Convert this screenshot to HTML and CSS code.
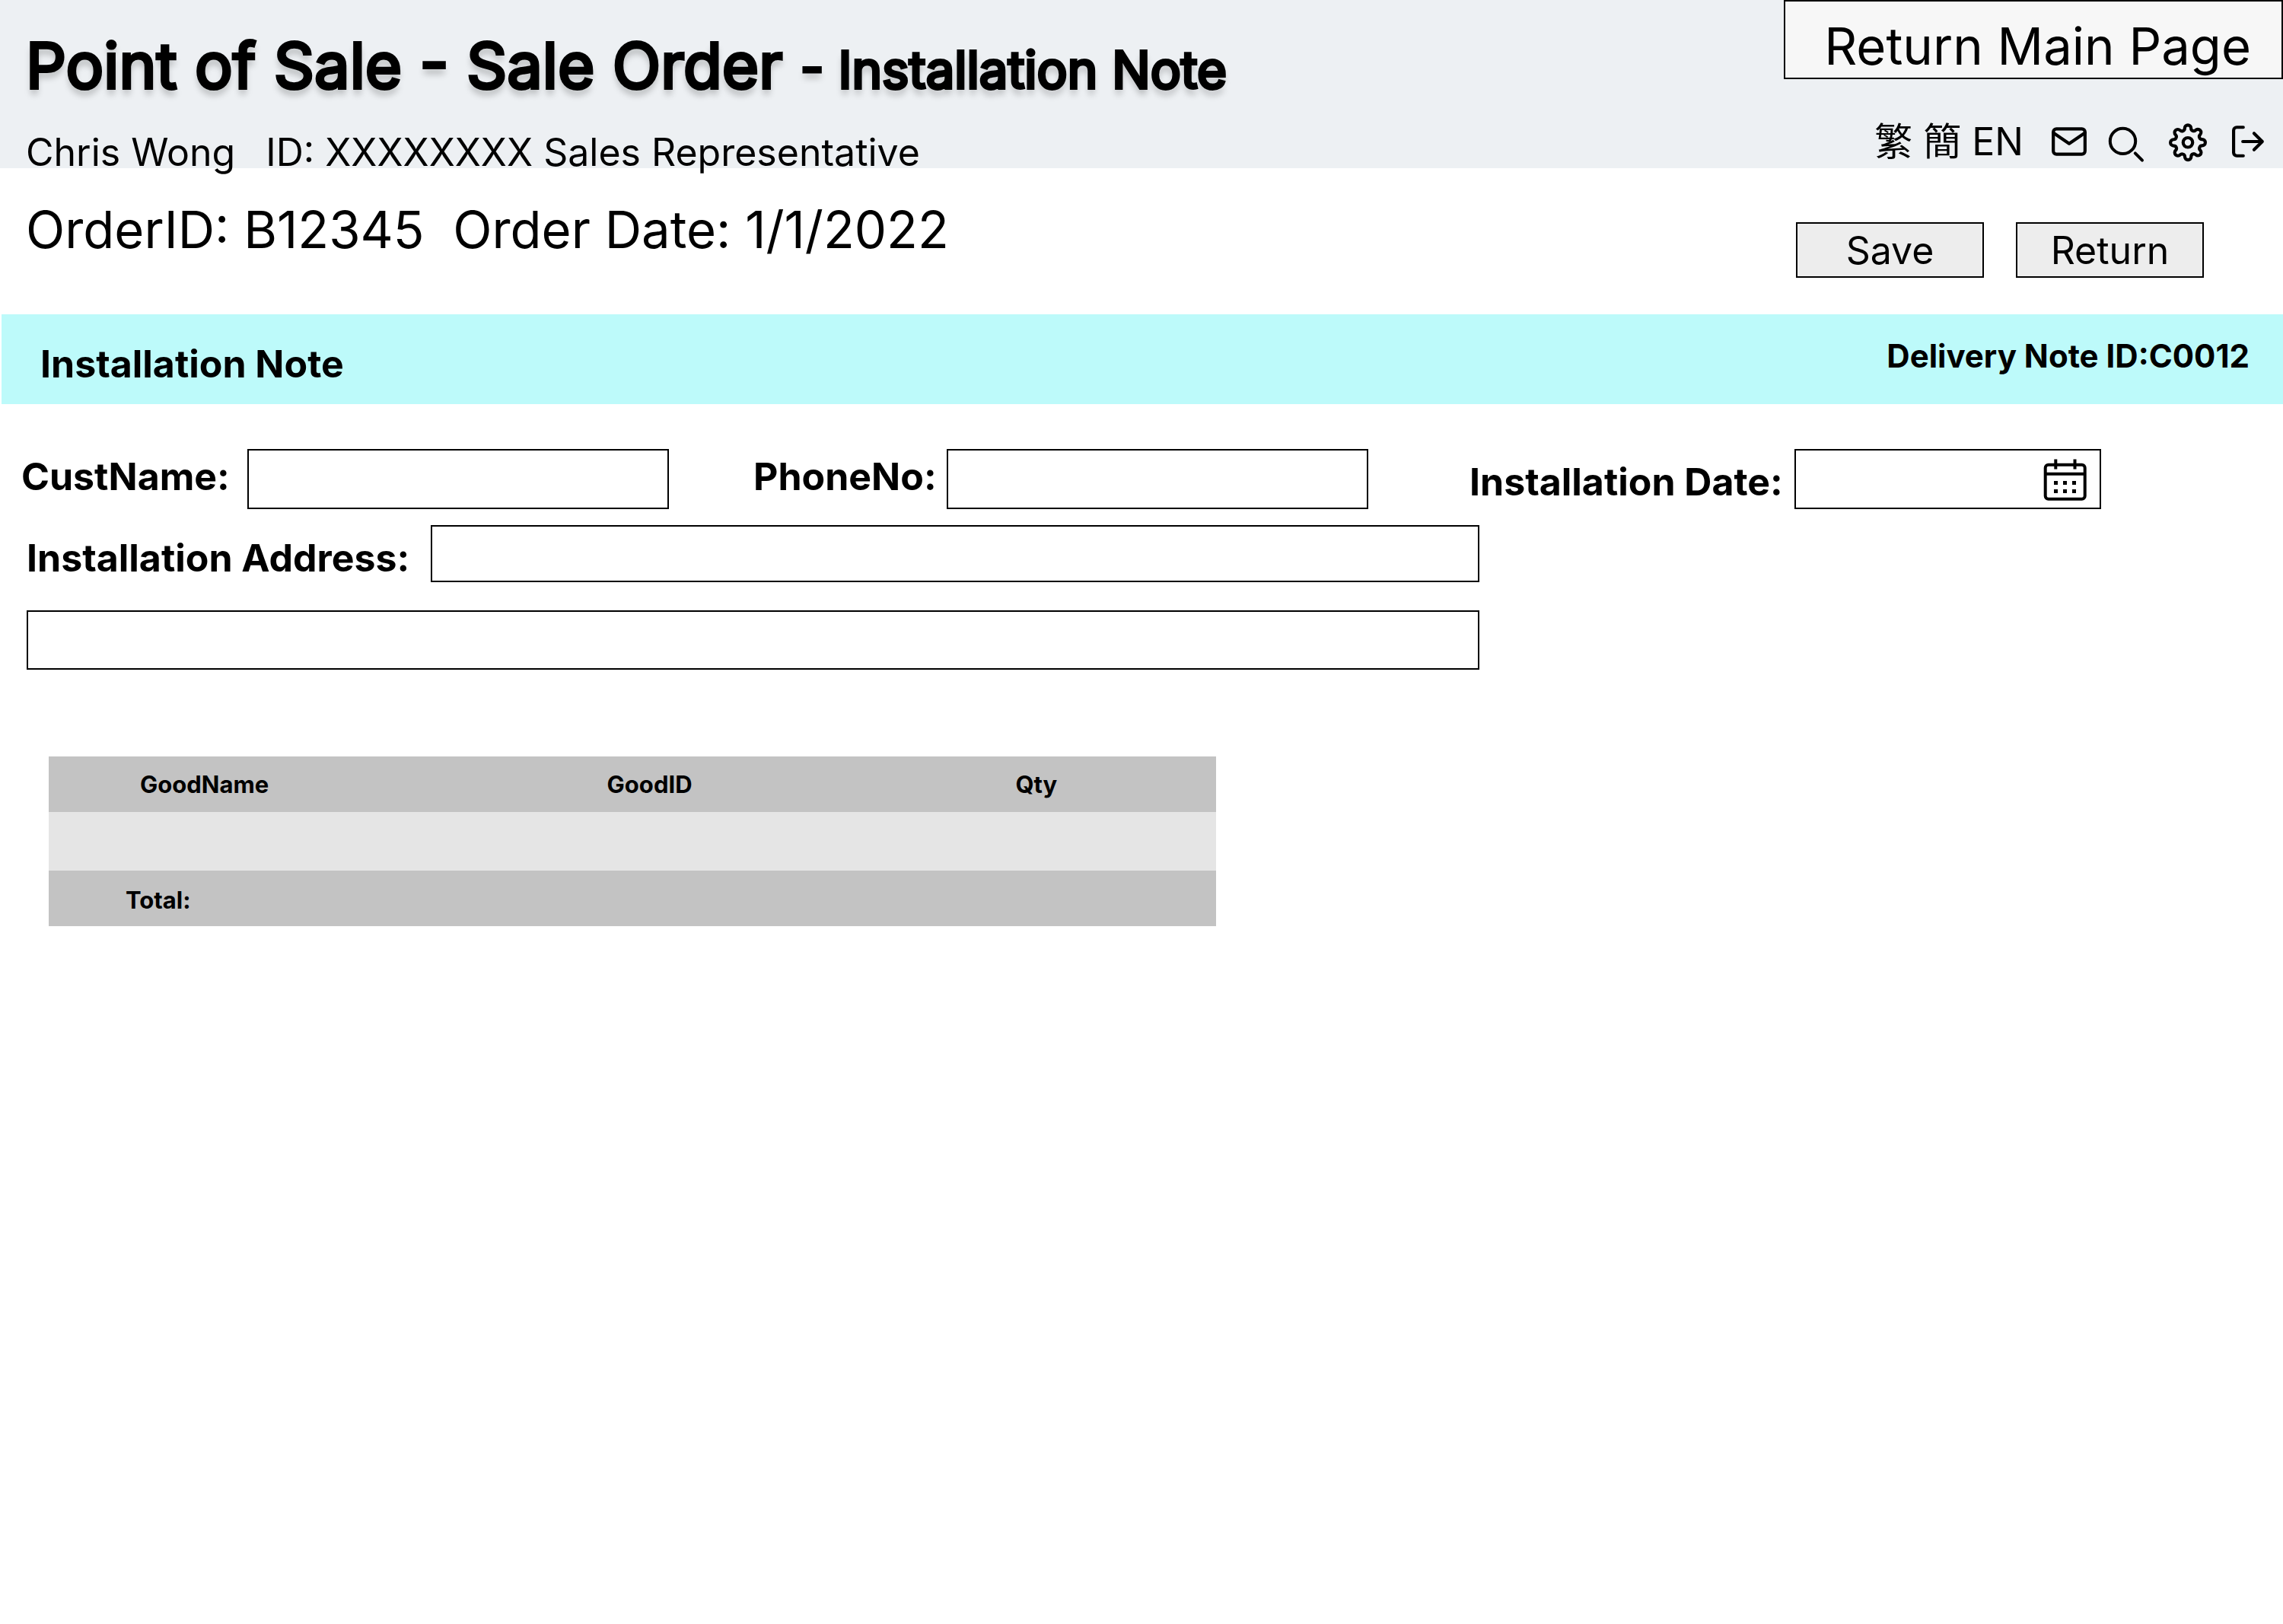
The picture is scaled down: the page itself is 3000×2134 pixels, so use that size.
FILE: index.html
```html
<!DOCTYPE html>
<html lang="en">
<head>
  <meta charset="utf-8">
  <title>Point of Sale - Installation Note</title>
  <link rel="stylesheet" href="styles.css">
</head>
<body>
  <header class="topbar">
    <div class="topbar-info">
      <h1 class="title">Point of Sale - Sale Order <span class="title-sub">- Installation Note</span></h1>
      <p class="user">Chris Wong <span class="user-id">ID: XXXXXXXX</span> Sales Representative</p>
    </div>
    <div class="topbar-side">
      <button class="main-page" type="button">Return Main Page</button>
      <nav class="tools">
        <div class="languages">
          <a class="language" href="#" lang="zh-Hant">繁</a>
          <a class="language" href="#" lang="zh-Hant">簡</a>
          <a class="language" href="#">EN</a>
        </div>
        <button class="tool" type="button" aria-label="Mail">
          <svg class="icon" viewBox="0 0 24 24"><rect x="2" y="4" width="20" height="16" rx="2"/><path d="M22 6.5 12 13.3 2 6.5"/></svg>
        </button>
        <button class="tool" type="button" aria-label="Search">
          <svg class="icon icon-search" viewBox="0 0 50 50"><circle cx="17.5" cy="24.4" r="16.7"/><path d="M33.8 40.4 43 49.6"/></svg>
        </button>
        <button class="tool" type="button" aria-label="Settings">
          <svg class="icon" viewBox="0 -0.6 24 24"><circle cx="12" cy="12" r="3"/><path d="M19.4 15a1.65 1.65 0 0 0 .33 1.82l.06.06a2 2 0 0 1 0 2.83 2 2 0 0 1-2.83 0l-.06-.06a1.65 1.65 0 0 0-1.82-.33 1.65 1.65 0 0 0-1 1.51V21a2 2 0 0 1-2 2 2 2 0 0 1-2-2v-.09A1.65 1.65 0 0 0 9 19.4a1.65 1.65 0 0 0-1.82.33l-.06.06a2 2 0 0 1-2.83 0 2 2 0 0 1 0-2.83l.06-.06a1.65 1.65 0 0 0 .33-1.82 1.65 1.65 0 0 0-1.51-1H3a2 2 0 0 1-2-2 2 2 0 0 1 2-2h.09A1.65 1.65 0 0 0 4.6 9a1.65 1.65 0 0 0-.33-1.82l-.06-.06a2 2 0 0 1 0-2.83 2 2 0 0 1 2.83 0l.06.06a1.65 1.65 0 0 0 1.82.33H9a1.65 1.65 0 0 0 1-1.51V3a2 2 0 0 1 2-2 2 2 0 0 1 2 2v.09a1.65 1.65 0 0 0 1 1.51 1.65 1.65 0 0 0 1.82-.33l.06-.06a2 2 0 0 1 2.83 0 2 2 0 0 1 0 2.83l-.06.06a1.65 1.65 0 0 0-.33 1.82V9a1.65 1.65 0 0 0 1.51 1H21a2 2 0 0 1 2 2 2 2 0 0 1-2 2h-.09a1.65 1.65 0 0 0-1.51 1z"/></svg>
        </button>
        <button class="tool" type="button" aria-label="Log out">
          <svg class="icon" viewBox="0 0 24 24"><path d="M9.5 21H5.400a2 2 0 0 1-2-2V5a2 2 0 0 1 2-2h4.100M16.300 17.200 21.500 12 16.300 6.800M21.500 12H9.200"/></svg>
        </button>
      </nav>
    </div>
  </header>

  <main>
    <section class="order">
      <p class="order-info">OrderID: B12345  Order Date: 1/1/2022</p>
      <div class="order-actions">
        <button class="action" type="button">Save</button>
        <button class="action" type="button">Return</button>
      </div>
    </section>

    <section class="band">
      <h2 class="band-title">Installation Note</h2>
      <p class="band-id">Delivery Note ID:C0012</p>
    </section>

    <form class="form">
      <div class="row">
        <div class="field field-customer">
          <label class="label" for="customer">CustName:</label>
          <input class="input input-short" id="customer" type="text">
        </div>
        <div class="field field-phone">
          <label class="label" for="phone">PhoneNo:</label>
          <input class="input input-short" id="phone" type="tel">
        </div>
        <div class="field field-date">
          <label class="label label-low" for="date">Installation Date:</label>
          <div class="date-box">
            <input class="date-input" id="date" type="text">
            <button class="calendar" type="button" aria-label="Choose date">
              <svg class="calendar-icon" viewBox="0 0 58 56">
                <rect class="line" x="2.700" y="8.700" width="52" height="45" rx="4"/>
                <path class="line" d="M2.700 20.700H54.700M16.300 1.500V14.500M41.500 1.500V14.500"/>
                <path d="M14 30h5v5h-5zM26 30h5v5h-5zM38 30h5v5h-5zM14 41h5v5h-5zM26 41h5v5h-5zM38 41h5v5h-5z"/>
              </svg>
            </button>
          </div>
        </div>
      </div>
      <div class="address">
        <div class="field field-address">
          <label class="label label-low" for="address1">Installation Address:</label>
          <input class="input" id="address1" type="text">
        </div>
        <input class="input input-line" type="text" aria-label="Installation Address, line 2">
      </div>
    </form>

    <table class="goods">
      <colgroup><col class="col-name"><col class="col-id"><col class="col-qty"></colgroup>
      <thead>
        <tr><th>GoodName</th><th>GoodID</th><th>Qty</th></tr>
      </thead>
      <tbody>
        <tr><td></td><td></td><td></td></tr>
      </tbody>
      <tfoot>
        <tr><th>Total:</th><td></td><td></td></tr>
      </tfoot>
    </table>
  </main>
</body>
</html>
```
FILE: styles.css
```css
* {
  box-sizing: border-box;
}

body {
  margin: 0;
  background: #fff;
  color: #000;
  font-family: Inter, "Noto Sans CJK TC", sans-serif;
  font-size: 50px;
}

h1, h2, p {
  margin: 0;
}

button, input {
  margin: 0;
  padding: 0;
  border: 0;
  border-radius: 0;
  background: none;
  color: inherit;
  font: inherit;
}

/* Top bar */
.topbar {
  display: flex;
  justify-content: space-between;
  align-items: flex-start;
  background: #edf0f3;
}

.topbar-info {
  padding: 36px 0 0 34px;
}

.title {
  font-size: 83px;
  line-height: 100px;
  font-weight: 400;
  -webkit-text-stroke: 4px #000;
  text-shadow: 0 8px 8px rgba(0, 0, 0, 0.25);
}

.title-sub {
  font-size: 67px;
  line-height: 67px;
}

.user {
  margin-top: 43px;
  line-height: 42px;
}

.user-id {
  margin-left: 26px;
}

.topbar-side {
  display: flex;
  flex-direction: column;
  align-items: flex-end;
}

.main-page {
  width: 656px;
  height: 104px;
  padding: 18px 40px 0 0;
  border: 2px solid #000;
  background: #f7f7f7;
  font-size: 67px;
  line-height: 80px;
  text-align: right;
}

.tools {
  display: flex;
  gap: 28px;
  margin-top: 57px;
  padding-right: 22px;
}

.languages {
  display: flex;
  gap: 14px;
  margin-right: 7px;
}

.language {
  color: inherit;
  line-height: 50px;
  text-decoration: none;
}

.tool {
  width: 50px;
  height: 50px;
}

.icon {
  display: block;
  width: 50px;
  height: 50px;
  overflow: visible;
  fill: none;
  stroke: #000;
  stroke-width: 2;
  stroke-linecap: round;
  stroke-linejoin: round;
}

.icon-search {
  stroke-width: 4;
}

/* Order summary */
.order {
  display: flex;
  justify-content: space-between;
  align-items: flex-start;
  padding: 41px 104px 48px 34px;
}

.order-info {
  font-size: 67px;
  line-height: 80px;
  white-space: pre;
}

.order-actions {
  display: flex;
  gap: 42px;
  padding-top: 30px;
}

.action {
  width: 247px;
  height: 73px;
  border: 2px solid #000;
  background: #ededed;
}

/* Note heading */
.band {
  display: flex;
  justify-content: space-between;
  align-items: flex-start;
  margin-left: 2px;
  padding: 30px 44px 18px 51px;
  background: #bdfafa;
}

.band-title {
  font-size: 50px;
  line-height: 70px;
  font-weight: 700;
}

.band-id {
  font-size: 42px;
  line-height: 50px;
  font-weight: 700;
}

/* Form */
.form {
  padding-top: 59px;
}

.row {
  display: flex;
  padding: 0 239px 0 28px;
}

.field {
  display: flex;
  justify-content: space-between;
  align-items: flex-start;
}

.field-customer {
  width: 851px;
}

.field-phone {
  width: 808px;
  margin-left: 111px;
}

.field-date {
  width: 830px;
  margin-left: auto;
}

.label {
  line-height: 72px;
  font-weight: 700;
  white-space: nowrap;
}

.label-low {
  line-height: 86px;
}

.input {
  min-width: 0;
  height: 75px;
  padding: 0 16px;
  border: 2px solid #000;
  background: #fff;
}

.input-short {
  width: 554px;
  height: 79px;
}

.date-box {
  display: flex;
  align-items: center;
  width: 403px;
  height: 79px;
  padding: 0 16px;
  border: 2px solid #000;
  background: #fff;
}

.date-input {
  flex: 1;
  min-width: 0;
  height: 60px;
}

.calendar {
  width: 58px;
  height: 56px;
}

.calendar-icon {
  display: block;
  width: 58px;
  height: 56px;
}

.line {
  fill: none;
  stroke: #000;
  stroke-width: 4;
}

.address {
  display: flex;
  flex-direction: column;
  width: 1944px;
  padding: 14px 0 0 35px;
}

.field-address {
  gap: 26px;
}

.field-address .input {
  flex: 0 1 1378px;
}

.input-line {
  height: 78px;
  margin-top: 26px;
}

/* Goods table */
.goods {
  width: 1534px;
  margin: 114px 0 0 64px;
  border-collapse: collapse;
  table-layout: fixed;
  font-size: 31px;
  line-height: 38px;
}

.col-name {
  width: 40%;
}

.col-id {
  width: 35%;
}

.col-qty {
  width: 25%;
}

.goods th,
.goods td {
  height: 73px;
  padding: 0 0 0 120px;
  font-weight: 700;
  text-align: left;
}

.goods thead,
.goods tfoot {
  background: #c3c3c3;
}

.goods tbody {
  background: #e5e5e5;
}

.goods tbody td {
  height: 77px;
}

.goods tfoot th {
  padding: 4px 0 0 101px;
}
```
